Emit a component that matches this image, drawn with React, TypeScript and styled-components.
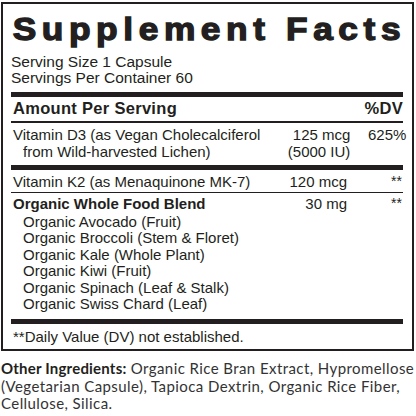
import React from "react";
import styled, { createGlobalStyle } from "styled-components";

const GlobalStyle = createGlobalStyle`
  html, body { margin: 0; padding: 0; background: #ffffff; }
  body { font-family: "Liberation Sans", Arial, sans-serif; color: #231f20; }
`;

const Page = styled.div`
  width: 416px;
  height: 416px;
  padding: 2px 0 0 1px;
  box-sizing: border-box;
  overflow: hidden;
`;

const Label = styled.section`
  width: 413px;
  box-sizing: border-box;
  border: 2px solid #231f20;
  padding: 6.5px 9px 3.5px 8px;
  display: flex;
  flex-direction: column;
`;

const Title = styled.h1`
  margin: 0;
  font-family: "Liberation Sans", Arial, sans-serif;
  font-weight: 900;
  font-size: 31.5px;
  line-height: 36px;
  letter-spacing: 5px;
  white-space: nowrap;
  -webkit-text-stroke: 1.3px #231f20;
  padding-left: 1.5px;
  transform: scaleX(1.12);
  transform-origin: left center;
`;

const Serving = styled.div`
  margin-top: 7.4px;
  font-size: 15.5px;
  line-height: 16.5px;
`;

const Rule = styled.div<{ $h: number; $mt: number }>`
  height: ${(p) => p.$h}px;
  margin-top: ${(p) => p.$mt}px;
  background: #231f20;
`;

const Row = styled.div<{ $mt?: number }>`
  display: grid;
  grid-template-columns: 1fr 90px 56px;
  padding-left: 2px;
  margin-top: ${(p) => p.$mt ?? 0}px;
  font-size: 15px;
  line-height: 17.5px;
`;

const HeaderRow = styled(Row)`
  font-weight: 700;
  font-size: 16.5px;
  line-height: 20px;
  padding-top: 1px;
  letter-spacing: 0.3px;
`;

const Name = styled.div<{ $bold?: boolean }>`
  font-weight: ${(p) => (p.$bold ? 700 : 400)};
  padding-left: 10px;
  text-indent: -10px;
  white-space: nowrap;
`;

const Amount = styled.div`
  text-align: right;
  white-space: nowrap;
`;

const Dv = styled.div<{ $stars?: boolean }>`
  text-align: right;
  white-space: nowrap;
  ${(p) => (p.$stars ? "font-size: 14px; padding-right: 1px;" : "")}
`;

const SubList = styled.ul`
  list-style: none;
  margin: 1.4px 0 0 0;
  padding: 0 0 0 12px;
  font-size: 15px;
  line-height: 16.45px;
`;

const SubItem = styled.li`
  white-space: nowrap;
`;

const Footnote = styled.div`
  margin-top: 3.75px;
  padding-left: 2px;
  font-size: 15px;
  line-height: 17.5px;
`;

const Other = styled.p`
  margin: 9px 0 0 0;
  font-family: Lato, "Open Sans", sans-serif;
  font-size: 15px;
  line-height: 17.8px;
  letter-spacing: 0.42px;
  color: #333333;
  white-space: nowrap;
`;

const OtherLabel = styled.span`
  font-weight: 700;
  color: #231f20;
  letter-spacing: 0.2px;
`;

const subItems = [
  "Organic Avocado (Fruit)",
  "Organic Broccoli (Stem & Floret)",
  "Organic Kale (Whole Plant)",
  "Organic Kiwi (Fruit)",
  "Organic Spinach (Leaf & Stalk)",
  "Organic Swiss Chard (Leaf)",
];

export default function App() {
  return (
    <Page>
      <GlobalStyle />
      <Label>
        <Title>Supplement Facts</Title>
        <Serving>
          Serving Size 1 Capsule
          <br />
          Servings Per Container 60
        </Serving>
        <Rule $h={5} $mt={5.1} />
        <HeaderRow>
          <Name $bold>Amount Per Serving</Name>
          <Amount />
          <Dv>%DV</Dv>
        </HeaderRow>
        <Rule $h={2} $mt={3} />
        <Row $mt={2.8}>
          <Name>
            Vitamin D3 (as Vegan Cholecalciferol
            <br />
            from Wild-harvested Lichen)
          </Name>
          <Amount>
            125 mcg
            <br />
            (5000 IU)
          </Amount>
          <Dv>625%</Dv>
        </Row>
        <Rule $h={5} $mt={4.7} />
        <Row $mt={2.9}>
          <Name>Vitamin K2 (as Menaquinone MK-7)</Name>
          <Amount>120 mcg</Amount>
          <Dv $stars>**</Dv>
        </Row>
        <Rule $h={1} $mt={1.1} />
        <Row $mt={2}>
          <Name $bold>Organic Whole Food Blend</Name>
          <Amount>30 mg</Amount>
          <Dv $stars>**</Dv>
        </Row>
        <SubList>
          {subItems.map((s) => (
            <SubItem key={s}>{s}</SubItem>
          ))}
        </SubList>
        <Rule $h={5} $mt={6.4} />
        <Footnote>**Daily Value (DV) not established.</Footnote>
      </Label>
      <Other>
        <OtherLabel>Other Ingredients:</OtherLabel> Organic Rice Bran Extract, Hypromellose
        <br />
        (Vegetarian Capsule), Tapioca Dextrin, Organic Rice Fiber,
        <br />
        Cellulose, Silica.
      </Other>
    </Page>
  );
}
